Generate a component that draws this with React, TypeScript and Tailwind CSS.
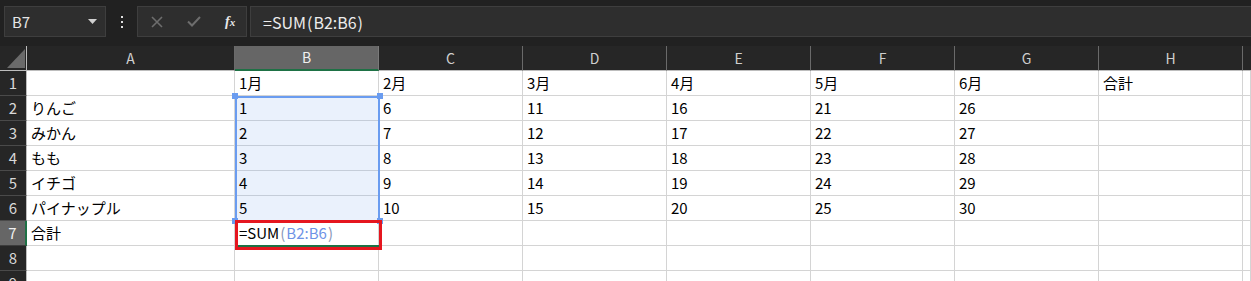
import React from "react";

const COLS = ["A", "B", "C", "D", "E", "F", "G", "H", ""];
const DATA: string[][] = [
  ["", "1月", "2月", "3月", "4月", "5月", "6月", "合計", ""],
  ["りんご", "1", "6", "11", "16", "21", "26", "", ""],
  ["みかん", "2", "7", "12", "17", "22", "27", "", ""],
  ["もも", "3", "8", "13", "18", "23", "28", "", ""],
  ["イチゴ", "4", "9", "14", "19", "24", "29", "", ""],
  ["パイナップル", "5", "10", "15", "20", "25", "30", "", ""],
  ["合計", "__F__", "", "", "", "", "", "", ""],
  ["", "", "", "", "", "", "", "", ""],
  ["", "", "", "", "", "", "", "", ""],
];

const FONT = { fontFamily: '"Noto Sans CJK JP", "Noto Sans", sans-serif' };

function Formula() {
  return (
    <span>
      <span className="text-black">=SUM</span>
      <span className="text-[#8796b8] px-[1px]">(</span>
      <span className="text-[#6f93e6]">B2:B6</span>
      <span className="text-[#8796b8] px-[1px]">)</span>
    </span>
  );
}

export default function App() {
  return (
    <div className="w-[1251px] h-[281px] overflow-hidden bg-white relative" style={FONT}>
      {/* Formula bar */}
      <div className="h-[46px] bg-[#212121] flex items-start pt-[6px] pl-[4px] gap-0">
        <div className="w-[102px] h-[31px] bg-[#2e2e2e] border border-[#3e3e3e] flex items-center justify-between pl-[7px] pr-[8px]">
          <span className="text-[15px] text-[#e6e6e6] leading-none">B7</span>
          <svg width="9" height="5" viewBox="0 0 9 5">
            <path d="M0 0 H9 L4.5 5 Z" fill="#d0d0d0" />
          </svg>
        </div>
        <div className="w-[31px] h-[31px] flex flex-col items-center justify-center gap-[3px]">
          <div className="w-[2px] h-[2px] bg-[#e0e0e0]" />
          <div className="w-[2px] h-[2px] bg-[#e0e0e0]" />
          <div className="w-[2px] h-[2px] bg-[#e0e0e0]" />
        </div>
        <div className="w-[110px] h-[31px] bg-[#2e2e2e] border border-[#3e3e3e] flex items-center pl-[13px] gap-[24px]">
          <svg width="12" height="12" viewBox="0 0 12 12">
            <path d="M1 1 L11 11 M11 1 L1 11" stroke="#6d6d6d" strokeWidth="1.6" />
          </svg>
          <svg width="14" height="11" viewBox="0 0 14 11">
            <path d="M1 5.5 L5 9.5 L13 1" stroke="#6d6d6d" strokeWidth="2" fill="none" />
          </svg>
          <span
            className="text-[14px] italic font-bold text-[#e8e8e8] leading-none"
            style={{ fontFamily: '"Liberation Serif", serif' }}
          >
            f<span className="text-[11px]">x</span>
          </span>
        </div>
        <div className="ml-[3px] flex-1 h-[31px] bg-[#2e2e2e] border border-[#3e3e3e] border-r-0 flex items-center pl-[12px]">
          <span className="text-[16px] text-[#ececec] leading-none">
            =SUM<span className="px-[1px]">(</span>B2:B6<span className="px-[1px]">)</span>
          </span>
        </div>
      </div>

      {/* Sheet grid */}
      <div
        className="grid"
        style={{ gridTemplateColumns: "27px 208px 144px 144px 144px 144px 144px 144px 144px 1fr" }}
      >
        {/* header row */}
        <div className="h-[25px] bg-[#262626] border-r border-[#bdbdbd] border-b border-b-[#bdbdbd] relative">
          <svg className="absolute left-[7px] top-[3px]" width="18" height="19" viewBox="0 0 18 19">
            <path d="M0 19 L18 19 L18 0 Z" fill="#6a6a6a" />
          </svg>
        </div>
        {COLS.map((c, i) =>
          c === "B" ? (
            <div
              key={i}
              className="h-[25px] bg-[#666666] border-r border-[#7a7a7a] border-b-2 border-b-[#1e7145] flex items-center justify-center text-[14px] text-[#f0f0f0]"
            >
              {c}
            </div>
          ) : (
            <div
              key={i}
              className={
                (i === COLS.length - 1 ? "" : "border-r ") +
                "h-[25px] bg-[#262626] border-[#6a6a6a] border-b border-b-[#bdbdbd] flex items-center justify-center text-[14px] text-[#cfcfcf]"
              }
            >
              {c}
            </div>
          )
        )}

        {DATA.map((row, r) => (
          <React.Fragment key={r}>
            <div
              className={
                r === 6
                  ? "h-[25px] bg-[#666666] border-r-2 border-r-[#1e7145] border-b border-b-[#3c3c3c] flex items-center justify-center text-[15px] text-[#f0f0f0]"
                  : "h-[25px] bg-[#262626] border-r border-r-[#bdbdbd] border-b border-b-[#4a4a4a] flex items-center justify-center text-[15px] text-[#d8d8d8]"
              }
            >
              {r + 1}
            </div>
            {row.map((v, c) => {
              const inSel = c === 1 && r >= 1 && r <= 5;
              return (
                <div
                  key={c}
                  className={
                    (inSel
                      ? "bg-[#eaf1fc] border-b-[#c5cdd9] "
                      : "bg-white border-b-[#d4d4d4] ") +
                    "h-[25px] border-r border-r-[#d4d4d4] border-b flex items-center pl-[4px] text-[15px] text-black whitespace-nowrap overflow-visible"
                  }
                >
                  {v === "__F__" ? <Formula /> : v}
                </div>
              );
            })}
          </React.Fragment>
        ))}
      </div>

      {/* Selection range B2:B6 */}
      <div className="absolute left-[235px] top-[96px] w-[145px] h-[126px] border-2 border-[#6a9cf0] pointer-events-none" />
      <div className="absolute left-[232px] top-[93px] w-[6px] h-[6px] bg-[#6a9cf0]" />
      <div className="absolute left-[377px] top-[93px] w-[6px] h-[6px] bg-[#6a9cf0]" />
      <div className="absolute left-[232px] top-[218px] w-[6px] h-[6px] bg-[#6a9cf0]" />
      <div className="absolute left-[377px] top-[218px] w-[6px] h-[6px] bg-[#6a9cf0]" />

      {/* Active cell B7 green border */}
      <div className="absolute left-[235px] top-[221px] w-[145px] h-[26px] border-l-2 border-b-2 border-[#1e7145]" />
      {/* Red annotation box */}
      <div className="absolute left-[235px] top-[220px] w-[147px] h-[30px] border-[3px] border-[#e5161f]" />
    </div>
  );
}
